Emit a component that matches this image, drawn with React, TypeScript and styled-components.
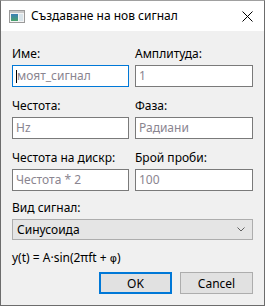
import styled, { createGlobalStyle } from "styled-components";

const GlobalStyle = createGlobalStyle`
  html, body {
    margin: 0;
    padding: 0;
    background: #ffffff;
  }
  * {
    box-sizing: border-box;
  }
`;

const Window = styled.div`
  width: 265px;
  height: 306px;
  border: 1px solid #6c6c6c;
  border-top-color: #a0a0a0;
  background: #f0f0f0;
  display: flex;
  flex-direction: column;
  font-family: "Noto Sans", "Segoe UI", sans-serif;
  font-size: 12px;
  color: #000;
`;

const TitleBar = styled.div`
  height: 30px;
  background: #ffffff;
  display: flex;
  align-items: center;
  padding: 0 0 0 8px;
`;

const Title = styled.span`
  flex: 1;
  margin-left: 6px;
  line-height: 16px;
`;

const CloseBtn = styled.div`
  width: 30px;
  height: 30px;
  display: flex;
  align-items: center;
  justify-content: center;
  margin-right: 2px;
`;

const Body = styled.div`
  flex: 1;
  padding: 15px 11px 0 11px;
  display: flex;
  flex-direction: column;
`;

const Grid = styled.div`
  display: grid;
  grid-template-columns: 117px 118px;
  column-gap: 6px;
  row-gap: 11px;
`;

const Group = styled.div`
  display: flex;
  flex-direction: column;
`;

const Label = styled.label`
  line-height: 16px;
  height: 16px;
  margin-bottom: 3px;
`;

const Field = styled.div<{ $focused?: boolean }>`
  height: 22px;
  background: #ffffff;
  border: 1px solid ${(p) => (p.$focused ? "#0078d7" : "#7a7a7a")};
  display: flex;
  align-items: center;
  padding-left: 3px;
  color: #8a8590;
  line-height: 16px;
`;

const Caret = styled.span`
  width: 1px;
  height: 13px;
  background: #000;
`;

const Select = styled.div`
  height: 21px;
  background: #e5e5e5;
  border: 1px solid #adadad;
  display: flex;
  align-items: center;
  justify-content: space-between;
  padding: 0 7px 0 4px;
`;

const SelectGroup = styled(Group)`
  margin-top: 9px;
`;

const Formula = styled.div`
  margin-top: 10px;
  line-height: 16px;
`;

const Greek = styled.span`
  font-family: "DejaVu Sans", sans-serif;
  font-size: 11px;
`;

const Buttons = styled.div`
  margin-top: 5px;
  display: flex;
  justify-content: flex-end;
  gap: 8px;
`;

const Button = styled.button<{ $primary?: boolean }>`
  width: 73px;
  height: 22px;
  background: #e1e1e1;
  border: ${(p) => (p.$primary ? "2px solid #0078d7" : "1px solid #adadad")};
  font-family: inherit;
  font-size: 12px;
  color: #000;
  padding: 0;
`;

const AppIcon = () => (
  <svg width="16" height="13" viewBox="0 0 16 13">
    <rect x="0.5" y="0.5" width="15" height="12" fill="#f4f4f4" stroke="#9a9a9a" />
    <rect x="1" y="1" width="14" height="2" fill="#c8c8c8" />
    <defs>
      <linearGradient id="g" x1="0" y1="0" x2="0" y2="1">
        <stop offset="0" stopColor="#3b7fb8" />
        <stop offset="1" stopColor="#4aa36a" />
      </linearGradient>
    </defs>
    <rect x="2" y="4" width="7" height="7" fill="url(#g)" />
    <rect x="10" y="4" width="4" height="7" fill="#d9e4ea" />
  </svg>
);

const CloseIcon = () => (
  <svg width="11" height="11" viewBox="0 0 11 11">
    <path d="M0.5 0.5 L10.5 10.5 M10.5 0.5 L0.5 10.5" stroke="#000" strokeWidth="1" />
  </svg>
);

const Chevron = () => (
  <svg width="8" height="5" viewBox="0 0 8 5">
    <path d="M0.5 0.5 L4 4 L7.5 0.5" stroke="#606060" strokeWidth="1" fill="none" />
  </svg>
);

export default function App() {
  return (
    <>
      <GlobalStyle />
      <Window>
        <TitleBar>
          <AppIcon />
          <Title>Създаване на нов сигнал</Title>
          <CloseBtn>
            <CloseIcon />
          </CloseBtn>
        </TitleBar>
        <Body>
          <Grid>
            <Group>
              <Label>Име:</Label>
              <Field $focused>
                <Caret />
                моят_сигнал
              </Field>
            </Group>
            <Group>
              <Label>Амплитуда:</Label>
              <Field>1</Field>
            </Group>
            <Group>
              <Label>Честота:</Label>
              <Field>Hz</Field>
            </Group>
            <Group>
              <Label>Фаза:</Label>
              <Field>Радиани</Field>
            </Group>
            <Group>
              <Label>Честота на дискр:</Label>
              <Field>Честота * 2</Field>
            </Group>
            <Group>
              <Label>Брой проби:</Label>
              <Field>100</Field>
            </Group>
          </Grid>
          <SelectGroup>
            <Label>Вид сигнал:</Label>
            <Select>
              <span>Синусоида</span>
              <Chevron />
            </Select>
          </SelectGroup>
          <Formula>
            y(t) = A·sin(2πft + <Greek>φ</Greek>)
          </Formula>
          <Buttons>
            <Button $primary>OK</Button>
            <Button>Cancel</Button>
          </Buttons>
        </Body>
      </Window>
    </>
  );
}
